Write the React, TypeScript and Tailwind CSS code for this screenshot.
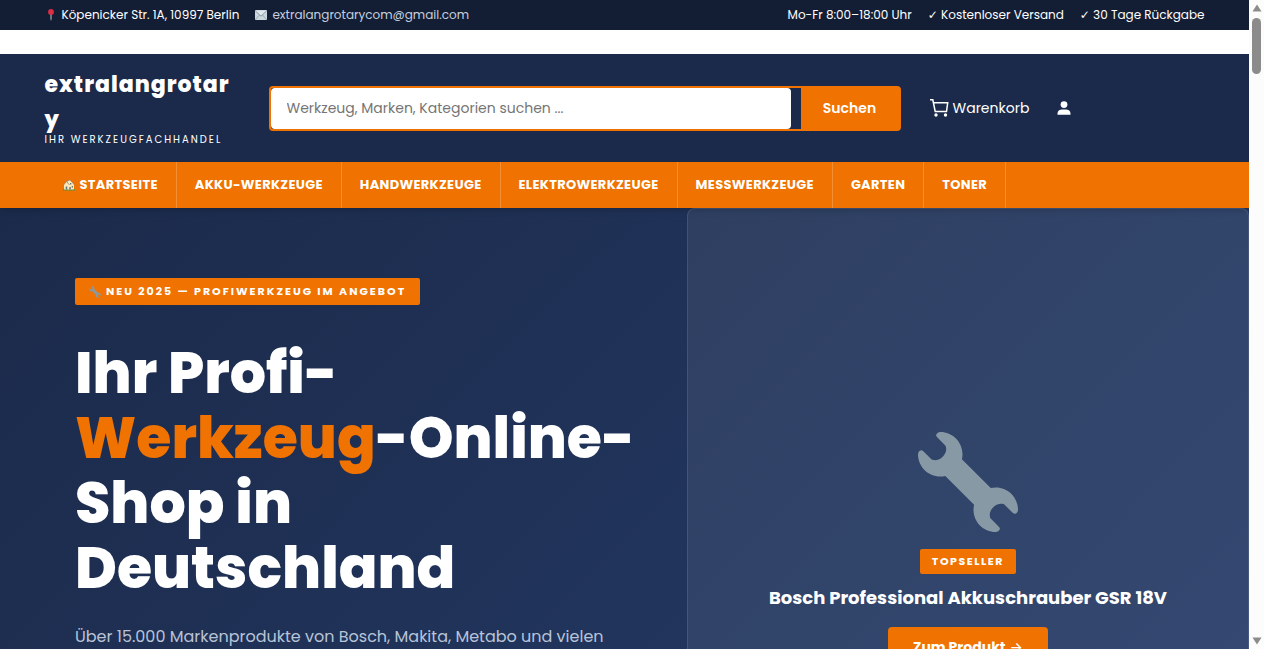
import type { SVGProps } from 'react';

interface NavItem {
  label: string;
  href: string;
  home?: boolean;
}

const navItems: NavItem[] = [
  { label: 'STARTSEITE', href: '#start', home: true },
  { label: 'AKKU-WERKZEUGE', href: '#akku' },
  { label: 'HANDWERKZEUGE', href: '#hand' },
  { label: 'ELEKTROWERKZEUGE', href: '#elektro' },
  { label: 'MESSWERKZEUGE', href: '#mess' },
  { label: 'GARTEN', href: '#garten' },
  { label: 'TONER', href: '#toner' },
];

function WrenchIcon(props: SVGProps<SVGSVGElement>) {
  return (
    <svg viewBox="0 0 36 36" fill="#8899a6" aria-hidden="true" {...props}>
      <path d="M27.989 19.977c-.622 0-1.225.078-1.806.213L15.811 9.818c.134-.581.212-1.184.212-1.806C16.023 3.587 12.436 0 8.012 0 7.11 0 5.91.916 6.909 1.915l2.997 2.997s.999 1.998-.999 3.995-3.996.998-3.996.998L1.915 6.908C.916 5.909 0 7.105 0 8.012c0 4.425 3.587 8.012 8.012 8.012.622 0 1.225-.078 1.806-.212l10.371 10.371c-.135.581-.213 1.184-.213 1.806 0 4.425 3.588 8.011 8.012 8.011.901 0 2.101-.916 1.102-1.915l-2.997-2.997s-.999-1.998.999-3.995 3.995-.999 3.995-.999l2.997 2.997c1 .999 1.916-.196 1.916-1.102 0-4.425-3.587-8.012-8.011-8.012z" />
    </svg>
  );
}

function PinIcon() {
  return (
    <svg viewBox="0 0 12 12" className="size-3" aria-hidden="true">
      <path d="M5 5h2v5l-1 2-1-2z" fill="#66757f" />
      <circle cx="6" cy="3" r="2.9" fill="#dd2e44" />
    </svg>
  );
}

function MailIcon() {
  return (
    <svg viewBox="0 0 12 10" className="h-[10px] w-3" aria-hidden="true">
      <rect width="12" height="10" rx="1" fill="#ccd6dd" />
      <path d="M.5 9.500l4-4.500M11.500 9.500l-4-4.500" stroke="#99aab5" fill="none" />
      <path d="M.3.8L6 6.200 11.700.8" stroke="#8899a6" fill="#e1e8ed" />
    </svg>
  );
}

function HouseIcon() {
  return (
    <svg viewBox="0 0 12 12" className="size-3" aria-hidden="true">
      <path d="M0 10h12v1.500H0z" fill="#5c913b" />
      <path d="M1 5.500L3.500 2.800 7 .8l4 4.700v5H1z" fill="#ffe8b6" />
      <path d="M.4 6l3.100-3.500L6.500 6M3.500 2.500L7 .8l4.500 5" stroke="#a08468" strokeWidth=".9" fill="none" />
      <path d="M2.700 7.500h1.600v3H2.700zM7 4h1.300v1.500H7zM8.700 7h1.300v1.500H8.700zM6.300 8h1.500v2.500H6.300z" fill="#66757f" />
    </svg>
  );
}

function CartIcon() {
  return (
    <svg viewBox="0 0 20 20" className="size-5" fill="none" stroke="white" strokeWidth="1.5" aria-hidden="true">
      <path d="M1 1.800h2.800l2.400 11.700h11.300l1.200-8.700H4.500" />
      <circle cx="7" cy="17" r="1.700" fill="white" stroke="none" />
      <circle cx="16.500" cy="17" r="1.700" fill="white" stroke="none" />
    </svg>
  );
}

function UserIcon() {
  return (
    <svg viewBox="0 0 14 14" className="size-[14px]" fill="white" aria-hidden="true">
      <circle cx="7" cy="3.600" r="3.400" />
      <path d="M.5 13.800v-1.300c0-2.500 2-4 4.500-4h4c2.500 0 4.500 1.500 4.500 4v1.300z" />
    </svg>
  );
}

function TopBar() {
  return (
    <div className="bg-[#131e35] text-xs text-white">
      <div className="mx-auto flex h-[30px] max-w-[1200px] items-center justify-between px-5">
        <div className="flex gap-4">
          <span className="flex items-center gap-[5px]">
            <PinIcon />
            Köpenicker Str. 1A, 10997 Berlin
          </span>
          <a href="mailto:extralangrotarycom@gmail.com" className="flex items-center gap-[5px] text-[#c5cfdf]">
            <MailIcon />
            extralangrotarycom@gmail.com
          </a>
        </div>
        <div className="flex gap-4">
          <span>Mo-Fr 8:00–18:00 Uhr</span>
          <span>✓ Kostenloser Versand</span>
          <span>✓ 30 Tage Rückgabe</span>
        </div>
      </div>
    </div>
  );
}

function Header() {
  return (
    <header className="mt-6 bg-[#1b2a4a] text-white">
      <div className="mx-auto flex h-[108px] max-w-[1200px] items-center px-5">
        <a href="#start" className="mr-9 block w-[188px] shrink-0 pb-1">
          <span className="block text-[22px] leading-[35px] font-extrabold tracking-[1px] break-all">extralangrotary</span>
          <span className="-mt-0.5 block text-[10px] leading-[10px] tracking-[2px]">IHR WERKZEUGFACHHANDEL</span>
        </a>
        <form className="flex h-[45px] w-[632px] rounded border-2 border-[#f07200]" onSubmit={(e) => e.preventDefault()}>
          <input
            type="search"
            aria-label="Suche"
            placeholder="Werkzeug, Marken, Kategorien suchen ..."
            className="mr-[10px] min-w-0 flex-1 rounded bg-white px-4 text-sm text-gray-800 outline-none placeholder:text-[#757575]"
          />
          <button type="submit" className="w-[98px] bg-[#f07200] text-sm font-semibold">
            Suchen
          </button>
        </form>
        <a href="#warenkorb" className="ml-7 flex items-center gap-1 text-sm">
          <CartIcon />
          Warenkorb
        </a>
        <a href="#konto" aria-label="Mein Konto" className="ml-7">
          <UserIcon />
        </a>
      </div>
    </header>
  );
}

function MainNav() {
  return (
    <nav className="relative bg-[#f07200] shadow-md">
      <ul className="mx-auto flex h-[46px] max-w-[1200px] px-5">
        {navItems.map((item) => (
          <li key={item.label}>
            <a
              href={item.href}
              className="flex h-full items-center gap-[5px] border-r border-white/20 px-[18px] text-[13px] font-bold tracking-wide text-white"
            >
              {item.home && <HouseIcon />}
              {item.label}
            </a>
          </li>
        ))}
      </ul>
    </nav>
  );
}

function Hero() {
  return (
    <section className="grid min-h-[683px] grid-cols-[55fr_45fr] bg-linear-135 from-[#1b2a4a] to-[#263d6b] text-white">
      <div className="pt-[70px] pr-10 pl-[75px]">
        <span className="inline-flex h-[27px] items-center gap-[5px] rounded-xs bg-[#f07200] px-[14px] text-[11px] font-bold tracking-[2px]">
          <WrenchIcon className="size-3" />
          NEU 2025 — PROFIWERKZEUG IM ANGEBOT
        </span>
        <h1 className="mt-9 text-[57px] leading-[65px] font-extrabold">
          Ihr Profi-<span className="text-[#f07200]">Werkzeug</span>-Online-Shop in Deutschland
        </h1>
        <p className="mt-[22px] text-base leading-7 text-[#b8c4d8]">
          Über 15.000 Markenprodukte von Bosch, Makita, Metabo und vielen
        </p>
      </div>
      <div className="flex flex-col items-center justify-center rounded-lg border border-white/10 bg-white/7">
        <WrenchIcon className="size-[100px]" />
        <span className="mt-[17px] flex h-[25px] items-center rounded-xs bg-[#f07200] px-3 text-[11px] font-bold tracking-[0.14em]">
          TOPSELLER
        </span>
        <h2 className="mt-[10px] text-lg leading-7 font-bold">Bosch Professional Akkuschrauber GSR 18V</h2>
        <a
          href="#produkt"
          className="mt-[15px] flex h-10 w-40 items-center justify-center gap-1 rounded bg-[#f07200] text-sm font-bold"
        >
          Zum Produkt <span className="font-[Inter,sans-serif] font-medium">→</span>
        </a>
      </div>
    </section>
  );
}

function Scrollbar() {
  return (
    <div className="flex w-[15px] shrink-0 flex-col items-center justify-between bg-[#fcfcfc] py-1" aria-hidden="true">
      <div className="flex flex-col items-center gap-[6px]">
        <svg viewBox="0 0 10 8" className="h-2 w-[10px]" fill="#8b8b8b">
          <path d="M5 0.500L9.500 7.500h-9z" />
        </svg>
        <div className="h-14 w-[9px] rounded-full bg-[#8b8b8b]" />
      </div>
      <svg viewBox="0 0 10 8" className="h-2 w-[10px]" fill="#8b8b8b">
        <path d="M5 7.500L.5.5h9z" />
      </svg>
    </div>
  );
}

export default function App() {
  return (
    <div className="flex h-screen overflow-hidden bg-white font-[Poppins,'Liberation_Sans','DejaVu_Sans',sans-serif]">
      <main className="min-w-0 flex-1 overflow-hidden">
        <TopBar />
        <Header />
        <MainNav />
        <Hero />
      </main>
      <Scrollbar />
    </div>
  );
}
